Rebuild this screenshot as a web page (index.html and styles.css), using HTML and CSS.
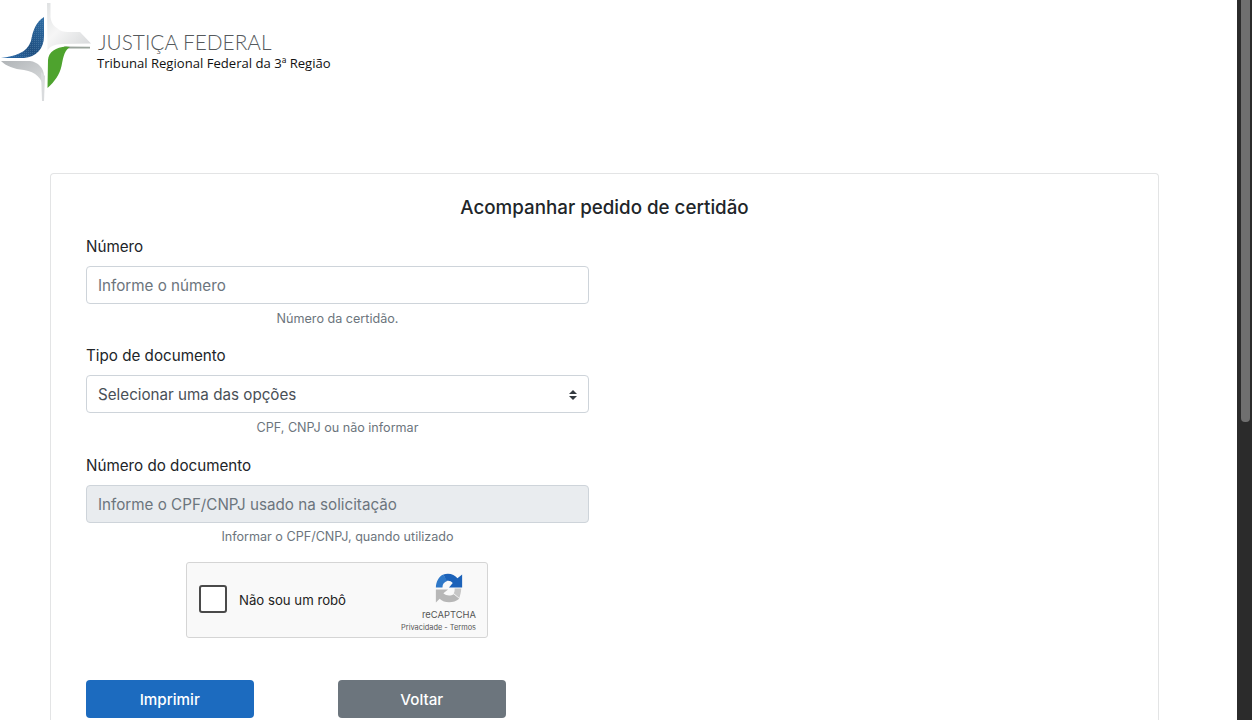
FILE: index.html
```html
<!DOCTYPE html>
<html lang="pt-BR">
<head>
<meta charset="utf-8">
<title>Acompanhar pedido de certidão</title>
<link rel="stylesheet" href="styles.css">
</head>
<body>
<div class="app">
  <main class="page">
    <header class="brand">
      <svg class="brand-mark" width="92" height="102" viewBox="0 0 92 102" aria-hidden="true">
        <defs>
          <linearGradient id="blue" x1="0" y1="1" x2="1" y2="0"><stop offset="0" stop-color="#2a6cae"/><stop offset="0.45" stop-color="#1f4f80"/><stop offset="1" stop-color="#2f6ea6"/></linearGradient>
          <linearGradient id="silver" x1="0" y1="0" x2="1" y2="1"><stop offset="0" stop-color="#dfe1e2"/><stop offset="0.4" stop-color="#f6f6f6"/><stop offset="1" stop-color="#d4d6d8"/></linearGradient>
          <linearGradient id="silver2" x1="0" y1="0" x2="1" y2="1"><stop offset="0" stop-color="#b0b4b7"/><stop offset="1" stop-color="#dcdedf"/></linearGradient>
          <pattern id="dots" width="2" height="2" patternUnits="userSpaceOnUse"><rect width="1" height="1" fill="#7fa6c9" opacity="0.3"/></pattern>
        </defs>
        <path fill="url(#silver)" d="M47 3 L50.5 3 L50.5 17 C51 21 53 26 57 28 C60 31 64 32 68 32 L80 32 L91 43.5 L63 44 C54 44 49 47 47.5 51 Z"/>
        <path fill="url(#blue)" d="M44 17 L44 36 C44 49 36 57 24 58 L1 58 C15 56 27 53 31 41 C33 30 36 22 44 17 Z"/>
        <path fill="url(#dots)" d="M44 17 L44 36 C44 49 36 57 24 58 L1 58 C15 56 27 53 31 41 C33 30 36 22 44 17 Z"/>
        <path fill="#9aa39c" d="M64 46.5 L90 46.8 L90 48.4 L64 48.4 Z"/>
        <path fill="#4ea32e" d="M47.5 88 L48 60 C48.5 52 56 47 66 46.5 L70 47 C65 50 63.5 55 61.5 66 C59.5 75 55 81 47.5 88 Z"/>
        <path fill="url(#silver2)" d="M1 61 L30 61 C38 62 44 68 44 76 L44 89 C42 78 36 72 24 70 C14 69 6 66 1 61 Z"/>
        <path fill="#d9dbdd" d="M41 72 L45 76 L44 101 L42 101 Z"/>
      </svg>
      <div class="brand-text">
        <div class="brand-title">JUSTIÇA FEDERAL</div>
        <div class="brand-sub">Tribunal Regional Federal da 3ª Região</div>
      </div>
    </header>

    <section class="card">
      <h1 class="card-title">Acompanhar pedido de certidão</h1>
      <form class="form">
        <div class="field">
          <label class="label">Número</label>
          <div class="control placeholder">Informe o número</div>
          <small class="hint">Número da certidão.</small>
        </div>
        <div class="field">
          <label class="label">Tipo de documento</label>
          <div class="control select">
            <span>Selecionar uma das opções</span>
            <svg width="8" height="12" viewBox="0 0 8 12" aria-hidden="true"><path fill="#343a40" d="M4 1 L8 5 H0 Z M4 11 L0 7 H8 Z"/></svg>
          </div>
          <small class="hint">CPF, CNPJ ou não informar</small>
        </div>
        <div class="field">
          <label class="label">Número do documento</label>
          <div class="control placeholder disabled">Informe o CPF/CNPJ usado na solicitação</div>
          <small class="hint">Informar o CPF/CNPJ, quando utilizado</small>
        </div>
        <div class="captcha">
          <span class="captcha-box"></span>
          <span class="captcha-label">Não sou um robô</span>
          <div class="captcha-brand">
            <svg class="captcha-logo" width="30" height="31" viewBox="0 0 32 32" aria-hidden="true">
              <path fill="#1c62b9" d="M10 1 C16 -1 22 1 25 5 L30 1 L30 15 L16 15 L20 10 C18 8 16 7 13 8 Z"/>
              <path fill="#2f78c8" d="M10 1 L14 8 C11 9 9 11 9 15 L2 15 C2 9 5 3 10 1 Z"/>
              <path fill="#b7b7b7" d="M2 17 L15 17 L10 21 C13 24 18 24 21 22 L27 27 C21 32 11 32 6 27 L2 31 Z"/>
              <path fill="#c6c6c6" d="M22 16 L29 16 C29 20 28 23 27 26 L21 21 C22 20 22 18 22 16 Z"/>
            </svg>
            <div class="captcha-name">reCAPTCHA</div>
            <div class="captcha-links">Privacidade - Termos</div>
          </div>
        </div>
        <div class="actions">
          <button type="button" class="btn btn-primary">Imprimir</button>
          <button type="button" class="btn btn-secondary">Voltar</button>
        </div>
      </form>
    </section>
  </main>
  <div class="scrollbar"><div class="thumb"></div></div>
</div>
</body>
</html>
```
FILE: styles.css
```css
* { box-sizing: border-box; }
html, body { margin: 0; height: 100%; overflow: hidden; background: #fff; }
body { font-family: Inter, "Liberation Sans", sans-serif; color: #212529; }
.app { display: flex; height: 720px; overflow: hidden; }
.page { flex: 1; min-width: 0; padding: 0 78px 0 50px; }
.scrollbar { width: 15px; flex: none; background: #2b2b2b; padding: 0 2px 0 4px; }
.thumb { height: 422px; background: #6f6f6f; border-radius: 0 0 4px 4px; }

.brand { display: flex; height: 173px; margin-left: -50px; align-items: flex-start; }
.brand-mark { display: block; flex: none; }
.brand-text { margin: 30px 0 0 5px; }
.brand-title { font-family: Lato, sans-serif; font-weight: 300; font-size: 20.8px; line-height: 24px; color: #55595c; margin-left: 1px; white-space: nowrap; }
.brand-sub { font-family: "Open Sans", sans-serif; font-size: 13.1px; line-height: 18px; color: #111; white-space: nowrap; }

.card { border: 1px solid #e3e4e5; border-bottom: 0; border-radius: 4px 4px 0 0; padding: 21px 35px 0; height: 600px; }
.card-title { margin: 0 0 14px; font-size: 18.75px; line-height: 26px; font-weight: 500; text-align: center; }
.form { width: 503px; }
.field { display: flex; flex-direction: column; margin-bottom: 16.85px; }
.label { font-size: 15.2px; line-height: 24px; margin-bottom: 7px; }
.control { height: 38px; border: 1px solid #ced4da; border-radius: 4px; padding: 0 11px; font-size: 15.2px; line-height: 37px; color: #495057; background: #fff; }
.placeholder { color: #6c757d; }
.disabled { background: #e9ecef; }
.select { display: flex; align-items: center; justify-content: space-between; padding-top: 1px; }
.hint { font-size: 12.6px; line-height: 18px; margin-top: 5.6px; text-align: center; color: #6c757d; }

.captcha { display: flex; align-items: center; width: 302px; height: 76px; margin: -1.35px 0 42px 100px; padding: 0 12px; background: #f9f9f9; border: 1px solid #d5d5d5; border-radius: 3px; }
.captcha-box { width: 28px; height: 28px; flex: none; margin-top: -2px; background: #fff; border: 2px solid #4a4a4a; border-radius: 3px; }
.captcha-label { margin-left: 12px; font-size: 13.2px; color: #222; flex: 1; }
.captcha-brand { display: flex; flex-direction: column; align-items: flex-end; color: #555; margin-right: -1px; padding-top: 6px; }
.captcha-logo { display: block; margin-right: 12px; }
.captcha-name { font-size: 9.4px; line-height: 12px; margin-top: 5px; }
.captcha-links { font-size: 7.4px; line-height: 11px; margin-top: 1px; white-space: nowrap; }

.actions { display: flex; gap: 84.5px; }
.btn { width: 167.5px; height: 38px; padding: 1px 0 0; border: 0; border-radius: 4px; color: #fff; font: 500 15.2px Inter, "Liberation Sans", sans-serif; }
.btn-primary { background: #1c6bbf; }
.btn-secondary { background: #6c757d; }
```
